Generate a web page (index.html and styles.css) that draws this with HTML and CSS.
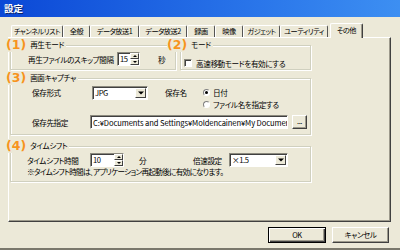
FILE: index.html
```html
<!DOCTYPE html>
<html>
<head>
  <title>設定</title>
  <link rel="stylesheet" href="styles.css">
</head>
<body>
  <div class="window">
    <div class="titlebar">設定</div>

    <div class="tabs">
      <div class="tab" style="width:52px">チャンネルリスト</div>
      <div class="tab" style="width:27px">全般</div>
      <div class="tab" style="width:49px">データ放送1</div>
      <div class="tab" style="width:48px">データ放送2</div>
      <div class="tab" style="width:28px">録画</div>
      <div class="tab" style="width:28px">映像</div>
      <div class="tab" style="width:37px">ガジェット</div>
      <div class="tab" style="width:48px">ユーティリティ</div>
      <div class="tab active" style="width:33px">その他</div>
    </div>

    <div class="panel">
      <div class="row-top">
        <div class="group g-play">
          <div class="group-head head-1"><span class="num">(1)</span><span class="title">再生モード</span></div>
          <div class="line">
            <span class="lbl" style="width:89px">再生ファイルのスキップ間隔</span>
            <div class="spin" style="width:23px"><span class="val">15</span><span class="spin-btns"><i class="up"></i><i class="down"></i></span></div>
            <span class="unit-sec">秒</span>
          </div>
        </div>

        <div class="group g-mode">
          <div class="group-head head-2"><span class="num">(2)</span><span class="title">モード</span></div>
          <div class="line">
            <span class="check"></span>
            <span>高速移動モードを有効にする</span>
          </div>
        </div>
      </div>

      <div class="group g-capture">
        <div class="group-head head-1"><span class="num">(3)</span><span class="title">画面キャプチャ</span></div>
        <div class="line top">
          <span class="lbl" style="width:60px">保存形式</span>
          <div class="combo" style="width:56px"><span class="val">JPG</span><span class="drop"></span></div>
          <span class="lbl name-lbl">保存名</span>
          <div class="radios">
            <div class="radio-row"><span class="radio on"></span>日付</div>
            <div class="radio-row"><span class="radio"></span>ファイル名を指定する</div>
          </div>
        </div>
        <div class="line path-line">
          <span class="lbl" style="width:58px">保存先指定</span>
          <div class="textbox" style="width:198px"><span class="clip">C:¥Documents and Settings¥Moldencainen¥My Documer</span></div>
          <div class="btn-browse">...</div>
        </div>
      </div>

      <div class="group g-shift">
        <div class="group-head head-1"><span class="num">(4)</span><span class="title">タイムシフト</span></div>
        <div class="line">
          <span class="lbl" style="width:63px">タイムシフト時間</span>
          <div class="spin" style="width:34px"><span class="val">10</span><span class="spin-btns"><i class="up"></i><i class="down"></i></span></div>
          <span class="unit-min">分</span>
          <span class="lbl speed-lbl">倍速設定</span>
          <div class="combo" style="width:59px"><span class="val">×1.5</span><span class="drop"></span></div>
        </div>
        <div class="note">※タイムシフト時間は、アプリケーション再起動後に有効になります。</div>
      </div>
    </div>

    <div class="buttons">
      <div class="button default">OK</div>
      <div class="button">キャンセル</div>
    </div>
  </div>
</body>
</html>
```

FILE: styles.css
```css
body {
  margin: 0;
  background-color: #ece9d8;
  font-family: "Noto Sans CJK JP", "Noto Sans", sans-serif;
  font-size: 7.6px;
  letter-spacing: -0.4px;
  font-feature-settings: "palt";
  color: #000;
  overflow: hidden;
}

.window {
  width: 400px;
  height: 248px;
  border-bottom: 2px solid #7a786c;
  background-color: #ece9d8;
}

.titlebar {
  height: 17px;
  line-height: 17px;
  padding-left: 4px;
  color: #fff;
  font-weight: bold;
  font-size: 9.5px;
  letter-spacing: 0;
  text-shadow: 1px 1px 0 #0a246a;
  background: linear-gradient(90deg, #0b48d6, #2a76ea 65%, #3d8ff2);
}

/* tabs */
.tabs {
  display: flex;
  align-items: flex-end;
  height: 15px;
  margin-top: 5px;
  padding-left: 11px;
  position: relative;
  z-index: 1;
}

.tab {
  box-sizing: border-box;
  height: 12px;
  line-height: 11px;
  font-size: 7.2px;
  letter-spacing: -0.5px;
  text-align: center;
  white-space: nowrap;
  overflow: hidden;
  border-top: 1px solid #fff;
  border-left: 1px solid #fff;
  border-right: 1px solid #555;
  border-radius: 2px 2px 0 0;
  background-color: #ece9d8;
}

.tab.active {
  height: 15px;
  line-height: 13px;
  margin-left: 2px;
  margin-bottom: -1px;
  border-right: 1px solid #404040;
  box-shadow: inset -1px 0 0 #9d9a8c;
}

/* panel */
.panel {
  box-sizing: border-box;
  width: 383px;
  height: 185px;
  margin-left: 8px;
  padding: 7px 0 0 1px;
  border: 1px solid #fff;
  border-right-color: #404040;
  border-bottom-color: #404040;
  box-shadow: inset -1px -1px 0 #9d9a8c;
}

.row-top {
  display: flex;
}

.group {
  position: relative;
  box-sizing: border-box;
  border: 1px solid #d0d0bf;
  box-shadow: inset 1px 1px 0 #fff, 1px 1px 0 #fff;
}

.g-play {
  width: 166px;
  height: 25px;
  padding: 6px 0 0 17px;
}

.g-mode {
  width: 131px;
  height: 25px;
  margin-left: 4px;
  padding: 10px 0 0 3px;
}

.g-capture {
  width: 301px;
  height: 57px;
  margin-top: 8px;
  padding: 7px 0 0 21px;
}

.g-shift {
  width: 301px;
  height: 36px;
  margin-top: 11px;
  padding: 6px 0 0 16px;
}

.group-head {
  position: absolute;
  top: -8px;
  display: flex;
  align-items: center;
  background-color: #ece9d8;
  padding-right: 2px;
}

.head-1 {
  left: -5px;
}

.head-2 {
  left: -14px;
}

.num {
  font-family: "DejaVu Sans", sans-serif;
  font-weight: bold;
  font-size: 12.5px;
  letter-spacing: 0;
  line-height: 14px;
  color: #f7941d;
}

.title {
  margin-left: 4px;
  line-height: 14px;
}

.line {
  display: flex;
  align-items: center;
  height: 14px;
  white-space: nowrap;
}

.line.top {
  align-items: flex-start;
  height: 24px;
}

.line.top .lbl {
  line-height: 14px;
}

.path-line {
  margin-top: 5px;
}

.lbl {
  flex: none;
  white-space: nowrap;
}

.unit-sec {
  margin-left: 18px;
}

.unit-min {
  margin-left: 15px;
  width: 8px;
}

.speed-lbl {
  margin-left: 46px;
  width: 36px;
}

.name-lbl {
  margin-left: 17px;
  width: 38px;
}

/* controls */
.spin,
.combo,
.textbox {
  box-sizing: border-box;
  height: 14px;
  display: flex;
  align-items: center;
  background-color: #fff;
  border: 1px solid;
  border-color: #8c8a7e #fff #fff #8c8a7e;
  box-shadow: inset 1px 1px 0 #404040;
}

.val {
  flex: 1;
  padding-left: 2px;
  line-height: 12px;
}

.spin-btns {
  display: flex;
  flex-direction: column;
  width: 9px;
  height: 12px;
}

.spin-btns i,
.drop {
  position: relative;
  box-sizing: border-box;
  background-color: #ece9d8;
  border: 1px solid;
  border-color: #fff #404040 #404040 #fff;
}

.spin-btns i {
  height: 6px;
}

.spin-btns i::after,
.drop::after {
  content: "";
  position: absolute;
  left: 50%;
  top: 50%;
  width: 0;
  height: 0;
  transform: translate(-50%, -50%);
  border-left: 2px solid transparent;
  border-right: 2px solid transparent;
}

.spin-btns .up::after {
  border-bottom: 2px solid #000;
}

.spin-btns .down::after {
  border-top: 2px solid #000;
}

.drop {
  width: 11px;
  height: 10px;
  margin-right: 1px;
}

.drop::after {
  border-left-width: 3px;
  border-right-width: 3px;
  border-top: 3px solid #000;
}

.textbox {
  padding-left: 2px;
  overflow: hidden;
  white-space: nowrap;
}

.clip {
  font-size: 7.6px;
  letter-spacing: -0.1px;
}

.btn-browse {
  box-sizing: border-box;
  width: 15px;
  height: 14px;
  margin-left: 4px;
  text-align: center;
  line-height: 10px;
  border: 1px solid;
  border-color: #fff #404040 #404040 #fff;
  box-shadow: inset -1px -1px 0 #9d9a8c;
}

.check {
  box-sizing: border-box;
  width: 8px;
  height: 8px;
  margin-right: 4px;
  background-color: #fff;
  border: 1px solid;
  border-color: #8c8a7e #fff #fff #8c8a7e;
  box-shadow: inset 1px 1px 0 #404040;
}

.radio-row {
  display: flex;
  align-items: center;
  height: 12px;
}

.radio {
  position: relative;
  box-sizing: border-box;
  width: 7px;
  height: 7px;
  margin-right: 3px;
  border-radius: 50%;
  background-color: #fff;
  border: 1px solid;
  border-color: #808080 #fff #fff #808080;
}

.radio.on::after {
  content: "";
  position: absolute;
  left: 1px;
  top: 1px;
  width: 3px;
  height: 3px;
  border-radius: 50%;
  background-color: #000;
}

.note {
  line-height: 10px;
  white-space: nowrap;
  letter-spacing: -0.7px;
}

/* dialog buttons */
.buttons {
  display: flex;
  justify-content: flex-end;
  gap: 6px;
  margin-top: 5px;
  padding-right: 11px;
}

.button {
  box-sizing: border-box;
  width: 57px;
  height: 16px;
  line-height: 13px;
  text-align: center;
  font-size: 7.5px;
  border: 1px solid;
  border-color: #fff #404040 #404040 #fff;
  box-shadow: inset -1px -1px 0 #9d9a8c;
}

.button.default {
  width: 58px;
  border: 1px solid #000;
  box-shadow: inset 1px 1px 0 #fff, inset -1px -1px 0 #404040, inset -2px -2px 0 #9d9a8c;
}
```
